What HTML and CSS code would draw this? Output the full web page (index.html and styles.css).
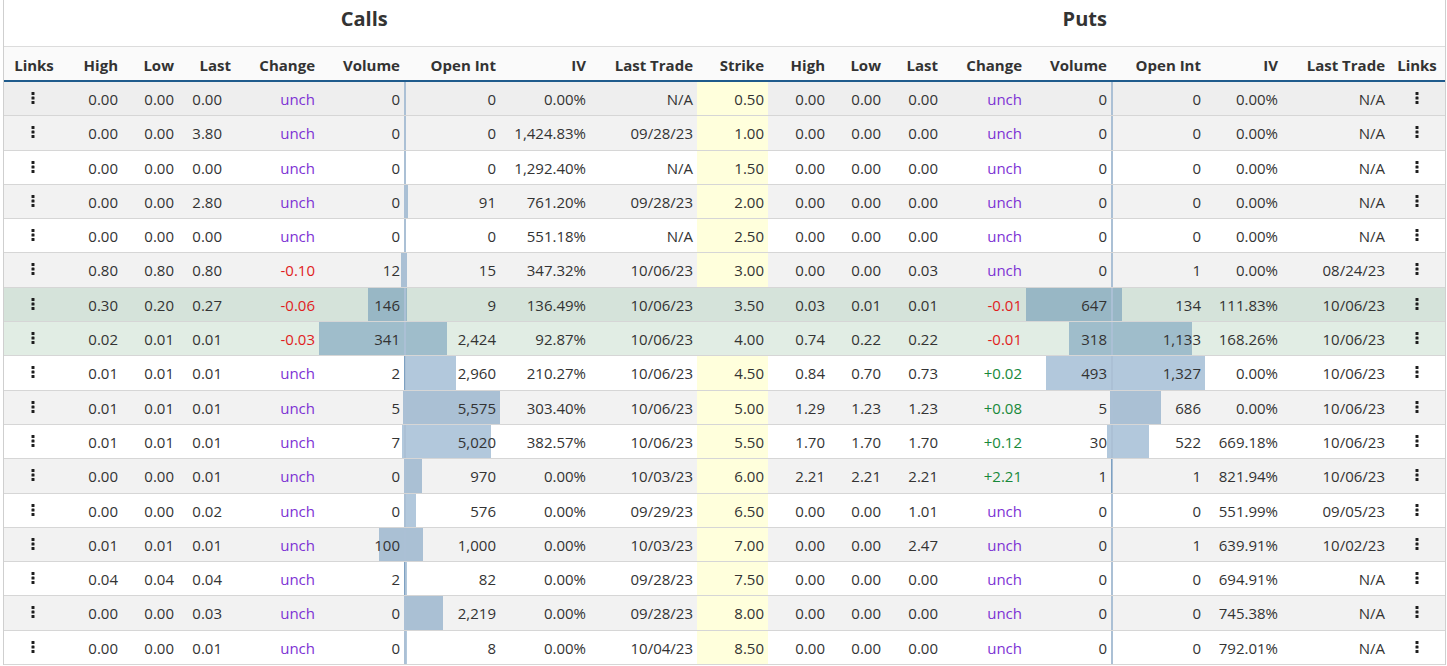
FILE: index.html
```html
<!DOCTYPE html>
<html lang="en">
<head>
<meta charset="utf-8">
<title>Options Chain</title>
<link rel="stylesheet" href="styles.css">
</head>
<body>
<div class="chain">
  <div class="titles">
    <div class="title">Calls</div>
    <div class="title">Puts</div>
  </div>
  <div class="cols head">
    <div class="c">Links</div><div>High</div><div>Low</div><div>Last</div><div>Change</div><div class="hv">Volume</div><div>Open Int</div><div>IV</div><div>Last Trade</div><div>Strike</div><div>High</div><div>Low</div><div>Last</div><div>Change</div><div class="hv">Volume</div><div>Open Int</div><div>IV</div><div>Last Trade</div><div class="c">Links</div>
  </div>

  <div class="cols row hover">
    <div class="lk l"><svg class="dots" viewBox="0 0 4 12"><rect x=".5" y="0" width="3" height="3" rx=".6"/><rect x=".5" y="4.5" width="3" height="3" rx=".6"/><rect x=".5" y="9" width="3" height="3" rx=".6"/></svg></div>
    <div>0.00</div><div>0.00</div><div class="lt">0.00</div><div class="un">unch</div><div class="vol">0</div><div class="oi">0</div><div>0.00%</div><div>N/A</div><div class="stk">0.50</div>
    <div>0.00</div><div>0.00</div><div>0.00</div><div class="un">unch</div><div class="vol">0</div><div class="oi">0</div><div>0.00%</div><div>N/A</div>
    <div class="lk"><svg class="dots" viewBox="0 0 4 12"><rect x=".5" y="0" width="3" height="3" rx=".6"/><rect x=".5" y="4.5" width="3" height="3" rx=".6"/><rect x=".5" y="9" width="3" height="3" rx=".6"/></svg></div>
  </div>

  <div class="cols row alt">
    <div class="lk l"><svg class="dots" viewBox="0 0 4 12"><rect x=".5" y="0" width="3" height="3" rx=".6"/><rect x=".5" y="4.5" width="3" height="3" rx=".6"/><rect x=".5" y="9" width="3" height="3" rx=".6"/></svg></div>
    <div>0.00</div><div>0.00</div><div class="lt">3.80</div><div class="un">unch</div><div class="vol">0</div><div class="oi">0</div><div>1,424.83%</div><div>09/28/23</div><div class="stk">1.00</div>
    <div>0.00</div><div>0.00</div><div>0.00</div><div class="un">unch</div><div class="vol">0</div><div class="oi">0</div><div>0.00%</div><div>N/A</div>
    <div class="lk"><svg class="dots" viewBox="0 0 4 12"><rect x=".5" y="0" width="3" height="3" rx=".6"/><rect x=".5" y="4.5" width="3" height="3" rx=".6"/><rect x=".5" y="9" width="3" height="3" rx=".6"/></svg></div>
  </div>

  <div class="cols row">
    <div class="lk l"><svg class="dots" viewBox="0 0 4 12"><rect x=".5" y="0" width="3" height="3" rx=".6"/><rect x=".5" y="4.5" width="3" height="3" rx=".6"/><rect x=".5" y="9" width="3" height="3" rx=".6"/></svg></div>
    <div>0.00</div><div>0.00</div><div class="lt">0.00</div><div class="un">unch</div><div class="vol">0</div><div class="oi">0</div><div>1,292.40%</div><div>N/A</div><div class="stk">1.50</div>
    <div>0.00</div><div>0.00</div><div>0.00</div><div class="un">unch</div><div class="vol">0</div><div class="oi">0</div><div>0.00%</div><div>N/A</div>
    <div class="lk"><svg class="dots" viewBox="0 0 4 12"><rect x=".5" y="0" width="3" height="3" rx=".6"/><rect x=".5" y="4.5" width="3" height="3" rx=".6"/><rect x=".5" y="9" width="3" height="3" rx=".6"/></svg></div>
  </div>

  <div class="cols row alt">
    <div class="lk l"><svg class="dots" viewBox="0 0 4 12"><rect x=".5" y="0" width="3" height="3" rx=".6"/><rect x=".5" y="4.5" width="3" height="3" rx=".6"/><rect x=".5" y="9" width="3" height="3" rx=".6"/></svg></div>
    <div>0.00</div><div>0.00</div><div class="lt">2.80</div><div class="un">unch</div><div class="vol">0</div><div class="oi"><span class="bar" style="width:1.63%"></span>91</div><div>761.20%</div><div>09/28/23</div><div class="stk">2.00</div>
    <div>0.00</div><div>0.00</div><div>0.00</div><div class="un">unch</div><div class="vol">0</div><div class="oi">0</div><div>0.00%</div><div>N/A</div>
    <div class="lk"><svg class="dots" viewBox="0 0 4 12"><rect x=".5" y="0" width="3" height="3" rx=".6"/><rect x=".5" y="4.5" width="3" height="3" rx=".6"/><rect x=".5" y="9" width="3" height="3" rx=".6"/></svg></div>
  </div>

  <div class="cols row">
    <div class="lk l"><svg class="dots" viewBox="0 0 4 12"><rect x=".5" y="0" width="3" height="3" rx=".6"/><rect x=".5" y="4.5" width="3" height="3" rx=".6"/><rect x=".5" y="9" width="3" height="3" rx=".6"/></svg></div>
    <div>0.00</div><div>0.00</div><div class="lt">0.00</div><div class="un">unch</div><div class="vol">0</div><div class="oi">0</div><div>551.18%</div><div>N/A</div><div class="stk">2.50</div>
    <div>0.00</div><div>0.00</div><div>0.00</div><div class="un">unch</div><div class="vol">0</div><div class="oi">0</div><div>0.00%</div><div>N/A</div>
    <div class="lk"><svg class="dots" viewBox="0 0 4 12"><rect x=".5" y="0" width="3" height="3" rx=".6"/><rect x=".5" y="4.5" width="3" height="3" rx=".6"/><rect x=".5" y="9" width="3" height="3" rx=".6"/></svg></div>
  </div>

  <div class="cols row alt">
    <div class="lk l"><svg class="dots" viewBox="0 0 4 12"><rect x=".5" y="0" width="3" height="3" rx=".6"/><rect x=".5" y="4.5" width="3" height="3" rx=".6"/><rect x=".5" y="9" width="3" height="3" rx=".6"/></svg></div>
    <div>0.80</div><div>0.80</div><div class="lt">0.80</div><div class="dn">-0.10</div><div class="vol"><span class="bar" style="width:3.52%"></span>12</div><div class="oi"><span class="bar" style="width:0.27%"></span>15</div><div>347.32%</div><div>10/06/23</div><div class="stk">3.00</div>
    <div>0.00</div><div>0.00</div><div>0.03</div><div class="un">unch</div><div class="vol">0</div><div class="oi"><span class="bar" style="width:0.08%"></span>1</div><div>0.00%</div><div>08/24/23</div>
    <div class="lk"><svg class="dots" viewBox="0 0 4 12"><rect x=".5" y="0" width="3" height="3" rx=".6"/><rect x=".5" y="4.5" width="3" height="3" rx=".6"/><rect x=".5" y="9" width="3" height="3" rx=".6"/></svg></div>
  </div>

  <div class="cols row atm1">
    <div class="lk l"><svg class="dots" viewBox="0 0 4 12"><rect x=".5" y="0" width="3" height="3" rx=".6"/><rect x=".5" y="4.5" width="3" height="3" rx=".6"/><rect x=".5" y="9" width="3" height="3" rx=".6"/></svg></div>
    <div>0.30</div><div>0.20</div><div class="lt">0.27</div><div class="dn">-0.06</div><div class="vol"><span class="bar" style="width:42.82%"></span>146</div><div class="oi"><span class="bar" style="width:0.16%"></span>9</div><div>136.49%</div><div>10/06/23</div><div class="stk">3.50</div>
    <div>0.03</div><div>0.01</div><div>0.01</div><div class="dn">-0.01</div><div class="vol"><span class="bar" style="width:100%"></span>647</div><div class="oi"><span class="bar" style="width:10.10%"></span>134</div><div>111.83%</div><div>10/06/23</div>
    <div class="lk"><svg class="dots" viewBox="0 0 4 12"><rect x=".5" y="0" width="3" height="3" rx=".6"/><rect x=".5" y="4.5" width="3" height="3" rx=".6"/><rect x=".5" y="9" width="3" height="3" rx=".6"/></svg></div>
  </div>

  <div class="cols row atm2">
    <div class="lk l"><svg class="dots" viewBox="0 0 4 12"><rect x=".5" y="0" width="3" height="3" rx=".6"/><rect x=".5" y="4.5" width="3" height="3" rx=".6"/><rect x=".5" y="9" width="3" height="3" rx=".6"/></svg></div>
    <div>0.02</div><div>0.01</div><div class="lt">0.01</div><div class="dn">-0.03</div><div class="vol"><span class="bar" style="width:100%"></span>341</div><div class="oi"><span class="bar" style="width:43.48%"></span>2,424</div><div>92.87%</div><div>10/06/23</div><div class="stk">4.00</div>
    <div>0.74</div><div>0.22</div><div>0.22</div><div class="dn">-0.01</div><div class="vol"><span class="bar" style="width:49.15%"></span>318</div><div class="oi"><span class="bar" style="width:85.38%"></span>1,133</div><div>168.26%</div><div>10/06/23</div>
    <div class="lk"><svg class="dots" viewBox="0 0 4 12"><rect x=".5" y="0" width="3" height="3" rx=".6"/><rect x=".5" y="4.5" width="3" height="3" rx=".6"/><rect x=".5" y="9" width="3" height="3" rx=".6"/></svg></div>
  </div>

  <div class="cols row">
    <div class="lk l"><svg class="dots" viewBox="0 0 4 12"><rect x=".5" y="0" width="3" height="3" rx=".6"/><rect x=".5" y="4.5" width="3" height="3" rx=".6"/><rect x=".5" y="9" width="3" height="3" rx=".6"/></svg></div>
    <div>0.01</div><div>0.01</div><div class="lt">0.01</div><div class="un">unch</div><div class="vol"><span class="bar" style="width:0.59%"></span>2</div><div class="oi"><span class="bar" style="width:53.09%"></span>2,960</div><div>210.27%</div><div>10/06/23</div><div class="stk">4.50</div>
    <div>0.84</div><div>0.70</div><div>0.73</div><div class="up">+0.02</div><div class="vol"><span class="bar" style="width:76.20%"></span>493</div><div class="oi"><span class="bar" style="width:100%"></span>1,327</div><div>0.00%</div><div>10/06/23</div>
    <div class="lk"><svg class="dots" viewBox="0 0 4 12"><rect x=".5" y="0" width="3" height="3" rx=".6"/><rect x=".5" y="4.5" width="3" height="3" rx=".6"/><rect x=".5" y="9" width="3" height="3" rx=".6"/></svg></div>
  </div>

  <div class="cols row alt">
    <div class="lk l"><svg class="dots" viewBox="0 0 4 12"><rect x=".5" y="0" width="3" height="3" rx=".6"/><rect x=".5" y="4.5" width="3" height="3" rx=".6"/><rect x=".5" y="9" width="3" height="3" rx=".6"/></svg></div>
    <div>0.01</div><div>0.01</div><div class="lt">0.01</div><div class="un">unch</div><div class="vol"><span class="bar" style="width:1.47%"></span>5</div><div class="oi"><span class="bar" style="width:100%"></span>5,575</div><div>303.40%</div><div>10/06/23</div><div class="stk">5.00</div>
    <div>1.29</div><div>1.23</div><div>1.23</div><div class="up">+0.08</div><div class="vol"><span class="bar" style="width:0.77%"></span>5</div><div class="oi"><span class="bar" style="width:51.70%"></span>686</div><div>0.00%</div><div>10/06/23</div>
    <div class="lk"><svg class="dots" viewBox="0 0 4 12"><rect x=".5" y="0" width="3" height="3" rx=".6"/><rect x=".5" y="4.5" width="3" height="3" rx=".6"/><rect x=".5" y="9" width="3" height="3" rx=".6"/></svg></div>
  </div>

  <div class="cols row">
    <div class="lk l"><svg class="dots" viewBox="0 0 4 12"><rect x=".5" y="0" width="3" height="3" rx=".6"/><rect x=".5" y="4.5" width="3" height="3" rx=".6"/><rect x=".5" y="9" width="3" height="3" rx=".6"/></svg></div>
    <div>0.01</div><div>0.01</div><div class="lt">0.01</div><div class="un">unch</div><div class="vol"><span class="bar" style="width:2.05%"></span>7</div><div class="oi"><span class="bar" style="width:90.04%"></span>5,020</div><div>382.57%</div><div>10/06/23</div><div class="stk">5.50</div>
    <div>1.70</div><div>1.70</div><div>1.70</div><div class="up">+0.12</div><div class="vol"><span class="bar" style="width:4.64%"></span>30</div><div class="oi"><span class="bar" style="width:39.34%"></span>522</div><div>669.18%</div><div>10/06/23</div>
    <div class="lk"><svg class="dots" viewBox="0 0 4 12"><rect x=".5" y="0" width="3" height="3" rx=".6"/><rect x=".5" y="4.5" width="3" height="3" rx=".6"/><rect x=".5" y="9" width="3" height="3" rx=".6"/></svg></div>
  </div>

  <div class="cols row alt">
    <div class="lk l"><svg class="dots" viewBox="0 0 4 12"><rect x=".5" y="0" width="3" height="3" rx=".6"/><rect x=".5" y="4.5" width="3" height="3" rx=".6"/><rect x=".5" y="9" width="3" height="3" rx=".6"/></svg></div>
    <div>0.00</div><div>0.00</div><div class="lt">0.01</div><div class="un">unch</div><div class="vol">0</div><div class="oi"><span class="bar" style="width:17.40%"></span>970</div><div>0.00%</div><div>10/03/23</div><div class="stk">6.00</div>
    <div>2.21</div><div>2.21</div><div>2.21</div><div class="up">+2.21</div><div class="vol"><span class="bar" style="width:0.15%"></span>1</div><div class="oi"><span class="bar" style="width:0.08%"></span>1</div><div>821.94%</div><div>10/06/23</div>
    <div class="lk"><svg class="dots" viewBox="0 0 4 12"><rect x=".5" y="0" width="3" height="3" rx=".6"/><rect x=".5" y="4.5" width="3" height="3" rx=".6"/><rect x=".5" y="9" width="3" height="3" rx=".6"/></svg></div>
  </div>

  <div class="cols row">
    <div class="lk l"><svg class="dots" viewBox="0 0 4 12"><rect x=".5" y="0" width="3" height="3" rx=".6"/><rect x=".5" y="4.5" width="3" height="3" rx=".6"/><rect x=".5" y="9" width="3" height="3" rx=".6"/></svg></div>
    <div>0.00</div><div>0.00</div><div class="lt">0.02</div><div class="un">unch</div><div class="vol">0</div><div class="oi"><span class="bar" style="width:10.33%"></span>576</div><div>0.00%</div><div>09/29/23</div><div class="stk">6.50</div>
    <div>0.00</div><div>0.00</div><div>1.01</div><div class="un">unch</div><div class="vol">0</div><div class="oi">0</div><div>551.99%</div><div>09/05/23</div>
    <div class="lk"><svg class="dots" viewBox="0 0 4 12"><rect x=".5" y="0" width="3" height="3" rx=".6"/><rect x=".5" y="4.5" width="3" height="3" rx=".6"/><rect x=".5" y="9" width="3" height="3" rx=".6"/></svg></div>
  </div>

  <div class="cols row alt">
    <div class="lk l"><svg class="dots" viewBox="0 0 4 12"><rect x=".5" y="0" width="3" height="3" rx=".6"/><rect x=".5" y="4.5" width="3" height="3" rx=".6"/><rect x=".5" y="9" width="3" height="3" rx=".6"/></svg></div>
    <div>0.01</div><div>0.01</div><div class="lt">0.01</div><div class="un">unch</div><div class="vol"><span class="bar" style="width:29.33%"></span>100</div><div class="oi"><span class="bar" style="width:17.94%"></span>1,000</div><div>0.00%</div><div>10/03/23</div><div class="stk">7.00</div>
    <div>0.00</div><div>0.00</div><div>2.47</div><div class="un">unch</div><div class="vol">0</div><div class="oi"><span class="bar" style="width:0.08%"></span>1</div><div>639.91%</div><div>10/02/23</div>
    <div class="lk"><svg class="dots" viewBox="0 0 4 12"><rect x=".5" y="0" width="3" height="3" rx=".6"/><rect x=".5" y="4.5" width="3" height="3" rx=".6"/><rect x=".5" y="9" width="3" height="3" rx=".6"/></svg></div>
  </div>

  <div class="cols row">
    <div class="lk l"><svg class="dots" viewBox="0 0 4 12"><rect x=".5" y="0" width="3" height="3" rx=".6"/><rect x=".5" y="4.5" width="3" height="3" rx=".6"/><rect x=".5" y="9" width="3" height="3" rx=".6"/></svg></div>
    <div>0.04</div><div>0.04</div><div class="lt">0.04</div><div class="un">unch</div><div class="vol"><span class="bar" style="width:0.59%"></span>2</div><div class="oi"><span class="bar" style="width:1.47%"></span>82</div><div>0.00%</div><div>09/28/23</div><div class="stk">7.50</div>
    <div>0.00</div><div>0.00</div><div>0.00</div><div class="un">unch</div><div class="vol">0</div><div class="oi">0</div><div>694.91%</div><div>N/A</div>
    <div class="lk"><svg class="dots" viewBox="0 0 4 12"><rect x=".5" y="0" width="3" height="3" rx=".6"/><rect x=".5" y="4.5" width="3" height="3" rx=".6"/><rect x=".5" y="9" width="3" height="3" rx=".6"/></svg></div>
  </div>

  <div class="cols row alt">
    <div class="lk l"><svg class="dots" viewBox="0 0 4 12"><rect x=".5" y="0" width="3" height="3" rx=".6"/><rect x=".5" y="4.5" width="3" height="3" rx=".6"/><rect x=".5" y="9" width="3" height="3" rx=".6"/></svg></div>
    <div>0.00</div><div>0.00</div><div class="lt">0.03</div><div class="un">unch</div><div class="vol">0</div><div class="oi"><span class="bar" style="width:39.80%"></span>2,219</div><div>0.00%</div><div>09/28/23</div><div class="stk">8.00</div>
    <div>0.00</div><div>0.00</div><div>0.00</div><div class="un">unch</div><div class="vol">0</div><div class="oi">0</div><div>745.38%</div><div>N/A</div>
    <div class="lk"><svg class="dots" viewBox="0 0 4 12"><rect x=".5" y="0" width="3" height="3" rx=".6"/><rect x=".5" y="4.5" width="3" height="3" rx=".6"/><rect x=".5" y="9" width="3" height="3" rx=".6"/></svg></div>
  </div>

  <div class="cols row">
    <div class="lk l"><svg class="dots" viewBox="0 0 4 12"><rect x=".5" y="0" width="3" height="3" rx=".6"/><rect x=".5" y="4.5" width="3" height="3" rx=".6"/><rect x=".5" y="9" width="3" height="3" rx=".6"/></svg></div>
    <div>0.00</div><div>0.00</div><div class="lt">0.01</div><div class="un">unch</div><div class="vol">0</div><div class="oi"><span class="bar" style="width:0.14%"></span>8</div><div>0.00%</div><div>10/04/23</div><div class="stk">8.50</div>
    <div>0.00</div><div>0.00</div><div>0.00</div><div class="un">unch</div><div class="vol">0</div><div class="oi">0</div><div>792.01%</div><div>N/A</div>
    <div class="lk"><svg class="dots" viewBox="0 0 4 12"><rect x=".5" y="0" width="3" height="3" rx=".6"/><rect x=".5" y="4.5" width="3" height="3" rx=".6"/><rect x=".5" y="9" width="3" height="3" rx=".6"/></svg></div>
  </div>
</div>
</body>
</html>
```

FILE: styles.css
```css
* { box-sizing: border-box; }

body {
  margin: 0;
  background: #fff;
  color: #333;
  font-family: "Open Sans", "Noto Sans", sans-serif;
}

.chain {
  margin-left: 3px;
  width: 1443px;
  border-left: 1px solid #cfcfcf;
  border-right: 1px solid #cfcfcf;
}

.titles {
  display: grid;
  grid-template-columns: 1fr 1fr;
  height: 47px;
  border-bottom: 1px solid #dcdcdc;
  background: #fff;
}

.title {
  text-align: center;
  font-size: 20px;
  font-weight: 700;
  line-height: 38px;
  color: #333;
}

.cols {
  display: grid;
  grid-template-columns: 60px 58px 56px 57px 84px 87px 94px 90px 107px 71px 61px 56px 57px 84px 87px 92px 77px 107px 56px;
}

.head {
  height: 35px;
  background: #fafafa;
  border-bottom: 2px solid #1f5b8c;
  font-size: 15px;
  font-weight: 700;
  color: #333;
}

.head > div {
  padding: 4px 4px 0;
  line-height: 29px;
  text-align: right;
  white-space: nowrap;
}

.head > .hv { padding-right: 6px; }

.head > .c {
  text-align: center;
  padding: 4px 0 0;
}

.row {
  height: 34.3px;
  border-bottom: 1px solid #d6d6d6;
  font-size: 15px;
  background: #fff;
}

.row.alt { background: #f2f2f2; }
.row.hover { background: #eeeeee; }
.row.atm1 { background: #d5e3da; }
.row.atm2 { background: #e1ede4; }

.row > div {
  padding: 2px 4px 0;
  line-height: 31.3px;
  text-align: right;
  white-space: nowrap;
}

.row > .lt { padding-right: 13px; }

.row > .stk { background: #ffffdc; }
.row.atm1 > .stk,
.row.atm2 > .stk { background: transparent; }

.row > .vol {
  position: relative;
  z-index: 0;
  border-right: 2px solid #abc0d5;
}

.row > .oi {
  position: relative;
  z-index: 0;
}

.bar {
  position: absolute;
  top: 0;
  bottom: 0;
  z-index: -1;
  background: rgba(55, 112, 164, 0.385);
}

.vol .bar { right: 0; }
.oi .bar { left: 0; }

.un { color: #7d32d4; }
.dn { color: #e01d1d; }
.up { color: #18893a; }

.row > .lk {
  display: flex;
  justify-content: center;
  align-items: flex-start;
  padding: 10px 0 0;
}

.row > .lk.l { padding-right: 2px; }

.dots {
  display: block;
  width: 4px;
  height: 12px;
  fill: #1e1e1e;
}
```
